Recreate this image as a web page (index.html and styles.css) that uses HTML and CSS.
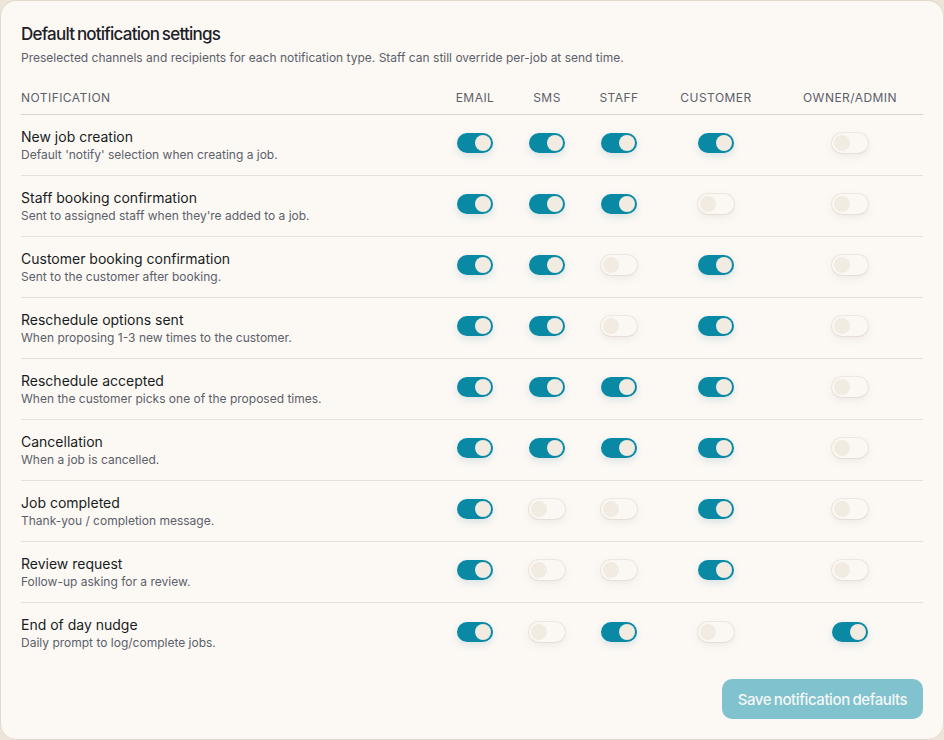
FILE: index.html
```html
<!DOCTYPE html>
<html>
<head>
<meta charset="utf-8">
<link rel="stylesheet" href="styles.css">
</head>
<body>
<div class="card">
  <h1 class="title">Default notification settings</h1>
  <p class="subtitle">Preselected channels and recipients for each notification type. Staff can still override per-job at send time.</p>
  <div class="table">
    <div class="row head">
      <div class="cell-name">NOTIFICATION</div>
      <div class="cell">EMAIL</div>
      <div class="cell">SMS</div>
      <div class="cell">STAFF</div>
      <div class="cell">CUSTOMER</div>
      <div class="cell">OWNER/ADMIN</div>
    </div>
    <div class="row">
      <div class="cell-name"><div class="name">New job creation</div><div class="desc">Default 'notify' selection when creating a job.</div></div>
      <div class="cell"><span class="tg on"></span></div>
      <div class="cell"><span class="tg on"></span></div>
      <div class="cell"><span class="tg on"></span></div>
      <div class="cell"><span class="tg on"></span></div>
      <div class="cell"><span class="tg"></span></div>
    </div>
    <div class="row">
      <div class="cell-name"><div class="name">Staff booking confirmation</div><div class="desc">Sent to assigned staff when they're added to a job.</div></div>
      <div class="cell"><span class="tg on"></span></div>
      <div class="cell"><span class="tg on"></span></div>
      <div class="cell"><span class="tg on"></span></div>
      <div class="cell"><span class="tg"></span></div>
      <div class="cell"><span class="tg"></span></div>
    </div>
    <div class="row">
      <div class="cell-name"><div class="name">Customer booking confirmation</div><div class="desc">Sent to the customer after booking.</div></div>
      <div class="cell"><span class="tg on"></span></div>
      <div class="cell"><span class="tg on"></span></div>
      <div class="cell"><span class="tg"></span></div>
      <div class="cell"><span class="tg on"></span></div>
      <div class="cell"><span class="tg"></span></div>
    </div>
    <div class="row">
      <div class="cell-name"><div class="name">Reschedule options sent</div><div class="desc">When proposing 1-3 new times to the customer.</div></div>
      <div class="cell"><span class="tg on"></span></div>
      <div class="cell"><span class="tg on"></span></div>
      <div class="cell"><span class="tg"></span></div>
      <div class="cell"><span class="tg on"></span></div>
      <div class="cell"><span class="tg"></span></div>
    </div>
    <div class="row">
      <div class="cell-name"><div class="name">Reschedule accepted</div><div class="desc">When the customer picks one of the proposed times.</div></div>
      <div class="cell"><span class="tg on"></span></div>
      <div class="cell"><span class="tg on"></span></div>
      <div class="cell"><span class="tg on"></span></div>
      <div class="cell"><span class="tg on"></span></div>
      <div class="cell"><span class="tg"></span></div>
    </div>
    <div class="row">
      <div class="cell-name"><div class="name">Cancellation</div><div class="desc">When a job is cancelled.</div></div>
      <div class="cell"><span class="tg on"></span></div>
      <div class="cell"><span class="tg on"></span></div>
      <div class="cell"><span class="tg on"></span></div>
      <div class="cell"><span class="tg on"></span></div>
      <div class="cell"><span class="tg"></span></div>
    </div>
    <div class="row">
      <div class="cell-name"><div class="name">Job completed</div><div class="desc">Thank-you / completion message.</div></div>
      <div class="cell"><span class="tg on"></span></div>
      <div class="cell"><span class="tg"></span></div>
      <div class="cell"><span class="tg"></span></div>
      <div class="cell"><span class="tg on"></span></div>
      <div class="cell"><span class="tg"></span></div>
    </div>
    <div class="row">
      <div class="cell-name"><div class="name">Review request</div><div class="desc">Follow-up asking for a review.</div></div>
      <div class="cell"><span class="tg on"></span></div>
      <div class="cell"><span class="tg"></span></div>
      <div class="cell"><span class="tg"></span></div>
      <div class="cell"><span class="tg on"></span></div>
      <div class="cell"><span class="tg"></span></div>
    </div>
    <div class="row last">
      <div class="cell-name"><div class="name">End of day nudge</div><div class="desc">Daily prompt to log/complete jobs.</div></div>
      <div class="cell"><span class="tg on"></span></div>
      <div class="cell"><span class="tg"></span></div>
      <div class="cell"><span class="tg on"></span></div>
      <div class="cell"><span class="tg"></span></div>
      <div class="cell"><span class="tg on"></span></div>
    </div>
  </div>
  <div class="actions">
    <button class="save">Save notification defaults</button>
  </div>
</div>
</body>
</html>
```

FILE: styles.css
```css
html, body {
  margin: 0;
  padding: 0;
  background: #ede5da;
}
body {
  font-family: Inter, "Noto Sans", sans-serif;
  color: #1f2328;
}
.card {
  box-sizing: border-box;
  width: 944px;
  height: 740px;
  background: #fcf9f5;
  border: 1px solid #e2d9cc;
  border-radius: 16px;
  padding: 21px 20px 0 20px;
}
.title {
  margin: 0;
  font-size: 17px;
  line-height: 24px;
  font-weight: 500;
  letter-spacing: -0.78px;
  word-spacing: -1px;
  color: #1d2127;
}
.subtitle {
  margin: 4px 0 0 0;
  font-size: 12px;
  line-height: 16px;
  color: #5b6069;
  letter-spacing: 0;
}
.table {
  margin-top: 16px;
}
.row {
  display: grid;
  grid-template-columns: 1fr 72px 72px 72px 122px 146px;
  align-items: center;
  border-bottom: 1px solid #e7e0d7;
  height: 61px;
  box-sizing: border-box;
}
.row.head {
  height: 33px;
  border-bottom: 1px solid #ddd3ca;
  font-size: 12px;
  letter-spacing: 0.45px;
  color: #5b6069;
  padding-bottom: 2px;
}
.row.last {
  border-bottom: none;
}
.cell {
  display: flex;
  justify-content: center;
  align-items: center;
}
.name {
  font-size: 14px;
  line-height: 18px;
  font-weight: 400;
  color: #181c22;
}
.desc {
  font-size: 12px;
  line-height: 16px;
  color: #5b6069;
  margin-top: 1px;
}
.tg {
  position: relative;
  display: block;
  width: 36px;
  height: 20px;
  border-radius: 10px;
  background: #fbf8f4;
  box-shadow: 0 3px 8px rgba(120, 100, 80, 0.12), 0 0 0 1px rgba(230, 222, 212, 0.5);
  margin-bottom: 4px;
}
.tg::after {
  content: "";
  position: absolute;
  top: 2px;
  left: 2px;
  width: 16px;
  height: 16px;
  border-radius: 50%;
  background: #f1ebe2;
}
.tg.on {
  background: #0a89a5;
  box-shadow: 0 3px 8px rgba(10, 100, 130, 0.15);
}
.tg.on::after {
  left: 18px;
  background: #f1ebe2;
}
.actions {
  display: flex;
  justify-content: flex-end;
  margin-top: 15px;
}
.save {
  width: 201px;
  height: 40px;
  border: none;
  border-radius: 10px;
  background: #80c2cd;
  color: #f4f8f8;
  font-family: Inter, "Noto Sans", sans-serif;
  font-size: 15px;
  font-weight: 500;
  letter-spacing: -0.4px;
  word-spacing: -1px;
}
```
